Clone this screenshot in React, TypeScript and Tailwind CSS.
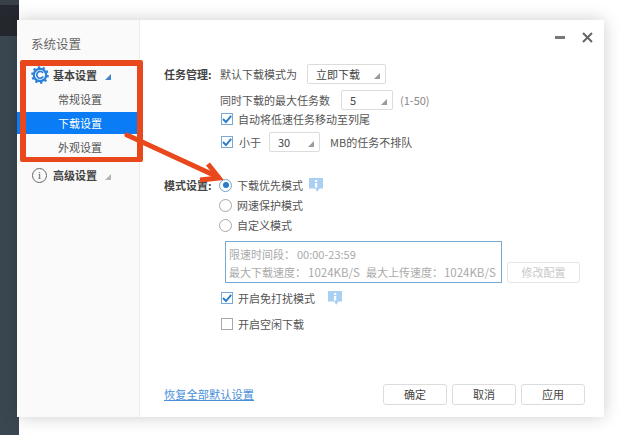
const font = "[font-family:'Noto_Sans_CJK_SC','Liberation_Sans',sans-serif]"
const wideColon = '\uFF1A'

function Caret({ className = 'border-b-[#9a9a9a]' }: { className?: string }) {
  return <span className={`w-0 h-0 border-l-[6px] border-l-transparent border-b-[6px] ${className}`} />
}

function Select({ value, width }: { value: string; width: string }) {
  return (
    <div className={`${width} h-[20px] flex items-center justify-between pl-[8px] pr-[5px] border border-[#dcdcdc] rounded-[2px] bg-white text-[11px] text-[#444]`}>
      <span>{value}</span>
      <span className="flex mt-[3px]"><Caret /></span>
    </div>
  )
}

function Check({ checked = true }: { checked?: boolean }) {
  return (
    <span className={`ml-[2px] w-[12px] h-[12px] shrink-0 border flex items-center justify-center bg-white ${checked ? 'border-[#79aad6]' : 'border-[#a8a8a8]'}`}>
      {checked && (
        <svg width="10" height="10" viewBox="0 0 10 10" fill="none">
          <path d="M1 5 L4 8 L9.2 1.8" stroke="#2a7cc6" strokeWidth="1.9" />
        </svg>
      )}
    </span>
  )
}

function Radio({ checked = false }: { checked?: boolean }) {
  return (
    <span className={`w-[13px] h-[13px] rounded-full border flex items-center justify-center ${checked ? 'border-[#6aa3d5]' : 'border-[#a8a8a8]'}`}>
      {checked && <span className="w-[6px] h-[6px] rounded-full bg-[#2a7cc6]" />}
    </span>
  )
}

function InfoTip() {
  return (
    <svg width="14" height="14" viewBox="0 0 14 14" className="block">
      <path d="M0 0 H14 V10.5 H10.5 L8 14 L6.5 10.5 H0 Z" fill="#a9d0f2" />
      <rect x="6" y="2" width="2.2" height="2" fill="#fff" />
      <rect x="6" y="5" width="2.2" height="4.5" fill="#fff" />
    </svg>
  )
}

function Button({ label, muted }: { label: string; muted?: boolean }) {
  return (
    <button className={`h-[21px] border rounded-[3px] bg-white text-[11px] ${muted ? 'w-[73px] border-[#e4e4e4] text-[#c8c8c8]' : 'w-[64px] border-[#dcdcdc] text-[#444]'}`}>
      {label}
    </button>
  )
}

function GearIcon() {
  return (
    <svg width="18" height="18" viewBox="0 0 18 18" className="mr-[4px]" fill="none">
      <circle cx="9" cy="9" r="6.2" stroke="#2c80d8" strokeWidth="2.2" />
      <circle cx="9" cy="9" r="7.8" stroke="#2c80d8" strokeWidth="2" strokeDasharray="2.4 2.5" />
      <path d="M12 7 A3.4 3.4 0 1 0 12.2 10.4" stroke="#2c80d8" strokeWidth="1.7" />
    </svg>
  )
}

function Sidebar() {
  return (
    <aside className="w-[123px] shrink-0 bg-[#fafafa] border-r border-[#ececec] pt-[14px] text-[11px] text-[#555]">
      <div className="pl-[14px] h-[20px] leading-[20px] text-[12.5px] text-[#666]">系统设置</div>
      <div className="mt-[10px] pl-[14px] h-[22px] flex items-center font-bold text-[#444]">
        <GearIcon />
        基本设置
        <span className="flex ml-[8px] mt-[3px]"><Caret className="border-b-[#3f86cf]" /></span>
      </div>
      <div className="h-[26px] pl-[41px] flex items-center">常规设置</div>
      <div className="h-[22px] pl-[41px] flex items-center bg-[#0a7cf5] text-white">下载设置</div>
      <div className="h-[26px] pl-[41px] flex items-center">外观设置</div>
      <div className="mt-[4px] pl-[14px] h-[22px] flex items-center font-bold text-[#444]">
        <span className="w-[15px] h-[15px] mr-[6px] ml-[1px] rounded-full border border-[#666] flex items-center justify-center text-[11px] font-normal text-[#555] [font-family:'Liberation_Serif',serif]">i</span>
        高级设置
        <span className="flex ml-[8px] mt-[3px]"><Caret className="border-b-[#b5b5b5]" /></span>
      </div>
    </aside>
  )
}

function Content() {
  return (
    <main className="flex-1 flex flex-col pl-[24px] pr-[19px] text-[11px] text-[#555]">
      <div className="h-[44px] shrink-0 flex items-start justify-end pt-[12px] gap-[17px] -mr-[8px]">
        <span className="w-[10px] h-[3px] mt-[4px] bg-[#777]" />
        <svg width="11" height="11" viewBox="0 0 11 11">
          <path d="M1 1 L10 10 M10 1 L1 10" stroke="#666" strokeWidth="2" />
        </svg>
      </div>

      <div className="flex">
        <div className="w-[55px] shrink-0 font-bold text-[#444] leading-[20px]">任务管理:</div>
        <div className="flex flex-col">
          <div className="flex items-center gap-[10px] h-[20px] ml-[1px]">
            默认下载模式为
            <Select value="立即下载" width="w-[79px]" />
          </div>
          <div className="flex items-center gap-[11px] h-[20px] mt-[6px] ml-[1px]">
            同时下载的最大任务数
            <Select value="5" width="w-[52px]" />
            <span className="-ml-[4px] text-[#888]">(1-50)</span>
          </div>
          <label className="flex items-center gap-[5px] h-[18px]">
            <Check />
            自动将低速任务移动至列尾
          </label>
          <div className="flex items-center h-[20px] mt-[4px]">
            <Check />
            <span className="ml-[6px]">小于</span>
            <span className="ml-[8px]"><Select value="30" width="w-[51px]" /></span>
            <span className="ml-[10px]">MB的任务不排队</span>
          </div>
        </div>
      </div>

      <div className="flex mt-[23px]">
        <div className="w-[55px] shrink-0 font-bold text-[#444] leading-[20px]">模式设置:</div>
        <div className="flex flex-col">
          <div className="flex items-center gap-[5px] h-[20px]">
            <Radio checked />
            下载优先模式
            <span className="ml-[1px]"><InfoTip /></span>
          </div>
          <div className="flex items-center gap-[5px] h-[20px]"><Radio />网速保护模式</div>
          <div className="flex items-center gap-[5px] h-[20px]"><Radio />自定义模式</div>
          <div className="flex items-end mt-[6px] ml-[6px]">
            <div className="w-[277px] h-[42px] border border-[#79a9d2] pl-[3px] pt-[3px] text-[#aaa] leading-[18px] whitespace-nowrap">
              <div>限速时间段{wideColon}<span className="ml-[2px]">00:00-23:59</span></div>
              <div>
                最大下载速度{wideColon}<span className="ml-[2px] text-[11.5px]">1024KB/S</span>
                <span className="ml-[6px]">最大上传速度{wideColon}</span><span className="ml-[1px] text-[11.5px]">1024KB/S</span>
              </div>
            </div>
            <span className="ml-[5px] flex"><Button label="修改配置" muted /></span>
          </div>
          <label className="flex items-center gap-[5px] h-[20px] mt-[5px]">
            <Check />
            开启免打扰模式
            <span className="ml-[8px]"><InfoTip /></span>
          </label>
          <label className="flex items-center gap-[5px] h-[20px] mt-[6px]">
            <Check checked={false} />
            开启空闲下载
          </label>
        </div>
      </div>

      <div className="mt-auto mb-[12px] flex items-center">
        <a className="text-[11.25px] text-[#4a90d9] underline">恢复全部默认设置</a>
        <div className="ml-auto flex gap-[5px]">
          <Button label="确定" />
          <Button label="取消" />
          <Button label="应用" />
        </div>
      </div>
    </main>
  )
}

export default function App() {
  return (
    <div className={`relative w-[620px] h-[435px] overflow-hidden bg-white ${font}`}>
      <div className="absolute left-0 top-0 w-[19px] h-[435px] bg-[#3a4751]">
        <div className="h-[5px] bg-[#3a4048]" />
        <div className="h-[31px] bg-[#25292f]" />
      </div>
      <div className="relative ml-[17px] mt-[20px] w-[587px] h-[397px] flex bg-white shadow-[0_0_16px_rgba(0,0,0,0.2)]">
        <Sidebar />
        <Content />
      </div>
      {/* callout drawn on top of the screenshot */}
      <div className="absolute left-[20px] top-[60px] w-[123px] h-[102px] border-[6px] border-b-[5px] border-[#e8481c] rounded-[2px]" />
      <svg className="absolute left-0 top-0" width="620" height="435" fill="none">
        <path d="M127 135 L218 177" stroke="#e8481c" strokeWidth="5" strokeLinecap="round" />
        <path d="M208 164 L219 178 L200 180" stroke="#e8481c" strokeWidth="5" />
      </svg>
    </div>
  )
}
